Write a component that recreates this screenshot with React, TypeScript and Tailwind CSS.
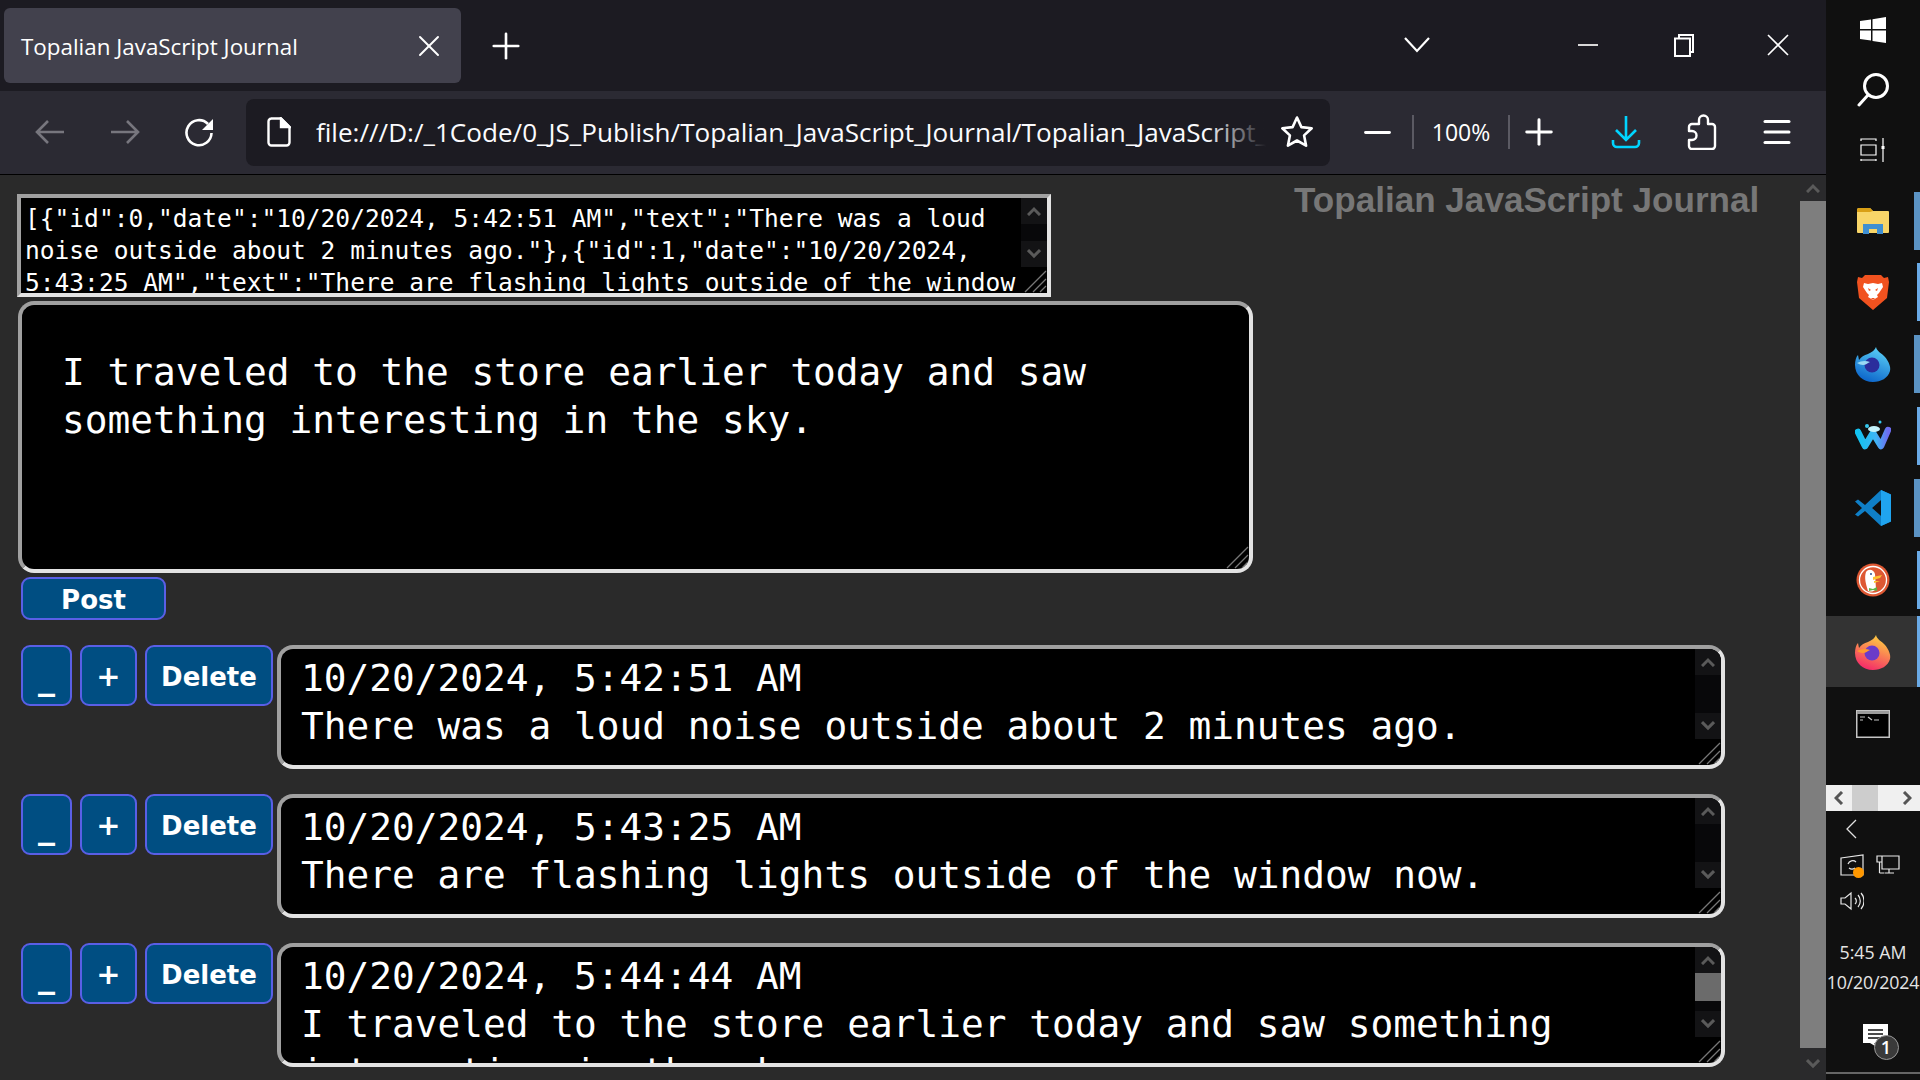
import { Menu, Minus, Plus, X } from 'lucide-react'

const MONO = "font-['DejaVu_Sans_Mono','Liberation_Mono',monospace]"
const UI = "font-['Open_Sans','Noto_Sans',sans-serif]"
const BEVEL = 'border-4 border-t-[#a0a0a0] border-l-[#a0a0a0] border-r-[#e3e3e3] border-b-[#e3e3e3]'

const JSON_TEXT =
  '[{"id":0,"date":"10/20/2024, 5:42:51 AM","text":"There was a loud noise outside about 2 minutes ago."},{"id":1,"date":"10/20/2024, 5:43:25 AM","text":"There are flashing lights outside of the window now."},{"id":2,"date":"10/20/2024, 5:44:44 AM"}]'

const ENTRIES = [
  { date: '10/20/2024, 5:42:51 AM', text: 'There was a loud noise outside about 2 minutes ago.', thumb: false },
  { date: '10/20/2024, 5:43:25 AM', text: 'There are flashing lights outside of the window now.', thumb: false },
  { date: '10/20/2024, 5:44:44 AM', text: 'I traveled to the store earlier today and saw something interesting in the sky.', thumb: true },
]

function Chevron({ up, size = 14 }: { up?: boolean; size?: number }) {
  return (
    <svg width={size} height={size * 0.72} viewBox="0 0 14 10" fill="none" stroke="#5a5a5a" strokeWidth="3">
      <path d={up ? 'M1 9l6-6 6 6' : 'M1 1l6 6 6-6'} />
    </svg>
  )
}

function BoxScrollbar({ thumb }: { thumb?: boolean }) {
  return (
    <div className="flex h-[90px] w-[26px] shrink-0 flex-col bg-[#08080a]">
      <div className="flex h-[26px] items-center justify-center bg-[#131315]">
        <Chevron up />
      </div>
      <div className="flex-1">{thumb && <div className="h-[28px] bg-[#6b6b6b]" />}</div>
      <div className="flex h-[26px] items-center justify-center bg-[#131315]">
        <Chevron />
      </div>
    </div>
  )
}

function Grip() {
  return (
    <svg className="absolute right-0 bottom-0" width="24" height="24" viewBox="0 0 24 24" stroke="#777" strokeWidth="1.3">
      <path d="M2 23L23 2M10 23L23 10M17 23L23 17" />
    </svg>
  )
}

function ActionButton({ label, className }: { label: string; className: string }) {
  return (
    <button className={`h-[61px] rounded-[9px] border-2 border-[#5a5fe6] bg-[#004e82] pt-[3px] font-['DejaVu_Sans',sans-serif] font-bold text-white ${className}`}>
      {label}
    </button>
  )
}

function EntryRow({ date, text, thumb }: { date: string; text: string; thumb: boolean }) {
  return (
    <div className="mt-[25px] ml-[4px] flex items-start">
      <ActionButton label="_" className="w-[51px] text-[34px] leading-[40px]" />
      <ActionButton label="+" className="ml-[8px] w-[57px] text-[29px]" />
      <ActionButton label="Delete" className="ml-[8px] w-[128px] text-[26px]" />
      <div className={`relative ml-[4px] flex h-[124px] w-[1448px] overflow-hidden rounded-[16px] bg-black ${BEVEL}`}>
        <div className={`min-w-0 flex-1 pt-[5px] pl-[20px] text-[37.8px] leading-[48px] text-white ${MONO}`}>
          <div>{date}</div>
          <div>{text}</div>
        </div>
        <BoxScrollbar thumb={thumb} />
        <Grip />
      </div>
    </div>
  )
}

function ToolIcon({ width, children }: { width: number; children: React.ReactNode }) {
  return (
    <div className="flex shrink-0 items-center justify-center" style={{ width }}>
      {children}
    </div>
  )
}

function TabStrip() {
  return (
    <div className="flex h-[91px] shrink-0 items-start bg-[#1c1b22] text-white">
      <div className={`mt-[8px] ml-[4px] flex h-[75px] w-[457px] items-center justify-between rounded-[6px] bg-[#42414d] pr-[14px] pl-[17px] text-[22.4px] ${UI}`}>
        <span className="pt-[2px]">Topalian JavaScript Journal</span>
        <X size={36} strokeWidth={1.3} />
      </div>
      <div className="mt-[46px] ml-[24px] -translate-y-1/2">
        <Plus size={42} strokeWidth={1.5} />
      </div>
      <div className="flex-1" />
      <div className="mt-[45px] mr-[147px] -translate-y-1/2">
        <svg width="28" height="18" viewBox="0 0 28 18" fill="none" stroke="white" strokeWidth="2.2">
          <path d="M2 2l12 13L26 2" />
        </svg>
      </div>
      <div className="mt-[44px] mr-[75px] h-[2px] w-[20px] bg-[#d8d8d8]" />
      <div className="mt-[45px] mr-[69px] -translate-y-1/2">
        <svg width="24" height="24" viewBox="0 0 24 24" fill="none" stroke="white" strokeWidth="2">
          <path d="M6 5V2h14v17h-3" />
          <path d="M2 5.5h15V23H2z" />
        </svg>
      </div>
      <div className="mt-[45px] mr-[36px] -translate-y-1/2">
        <svg width="24" height="24" viewBox="0 0 24 24" fill="none" stroke="white" strokeWidth="1.6">
          <path d="M2 2l20 20M22 2L2 22" />
        </svg>
      </div>
    </div>
  )
}

function Toolbar() {
  return (
    <div className="flex h-[84px] shrink-0 items-center border-b border-black bg-[#2b2a33] pb-[1px] pl-[12px] text-white">
      <ToolIcon width={75}>
        <svg width="30" height="26" viewBox="0 0 30 26" fill="none" stroke="#77767e" strokeWidth="2.6">
          <path d="M29 13H2M13 2L2 13l11 11" />
        </svg>
      </ToolIcon>
      <ToolIcon width={75}>
        <svg width="30" height="26" viewBox="0 0 30 26" fill="none" stroke="#77767e" strokeWidth="2.6">
          <path d="M1 13h27M17 2l11 11-11 11" />
        </svg>
      </ToolIcon>
      <ToolIcon width={75}>
        <svg className="-ml-[2px]" width="30" height="30" viewBox="0 0 30 30" fill="none">
          <path d="M24 7A12.5 12.5 0 1 0 27.5 16" stroke="white" strokeWidth="2.6" />
          <path d="M29 2v11H18z" fill="white" />
        </svg>
      </ToolIcon>
      <div className="ml-[9px] flex h-[67px] w-[1084px] shrink-0 items-center rounded-[8px] bg-[#1c1b22] pl-[21px]">
        <svg className="shrink-0" width="24" height="30" viewBox="0 0 24 30" fill="none" stroke="white" strokeWidth="2.4">
          <path d="M4 1.5h10L22.5 10v15.5a3 3 0 0 1-3 3h-15a3 3 0 0 1-3-3v-21a3 3 0 0 1 3-3z" />
          <path d="M14 1.5l8.5 8.5H14z" fill="white" />
        </svg>
        <div className={`relative ml-[25px] w-[950px] shrink-0 overflow-hidden pt-[2px] text-[26.1px] whitespace-nowrap text-[#fbfbfe] ${UI}`}>
          file:///D:/_1Code/0_JS_Publish/Topalian_JavaScript_Journal/Topalian_JavaScript_Journal.html
          <div className="absolute inset-y-0 right-0 w-[60px] bg-gradient-to-r from-transparent to-[#1c1b22]" />
        </div>
        <ToolIcon width={62}>
          <svg width="34" height="34" viewBox="0 0 34 34" fill="none" stroke="white" strokeWidth="2.6" strokeLinejoin="round">
            <path d="M17 2.5l4.4 9.6 10.3 1.2-7.6 7.1 2 10.3-9.1-5.2-9.1 5.2 2-10.3-7.6-7.1 10.3-1.2z" />
          </svg>
        </ToolIcon>
      </div>
      <ToolIcon width={82}>
        <Minus size={41} strokeWidth={1.7} className="ml-[12px]" />
      </ToolIcon>
      <div className="h-[34px] w-[2px] shrink-0 bg-[#5b5a63]" />
      <div className={`flex w-[94px] shrink-0 justify-center text-[23px] ${UI}`}>100%</div>
      <div className="h-[34px] w-[2px] shrink-0 bg-[#5b5a63]" />
      <ToolIcon width={58}>
        <Plus size={42} strokeWidth={1.7} />
      </ToolIcon>
      <ToolIcon width={116}>
        <svg width="30" height="34" viewBox="0 0 30 34" fill="none" stroke="#00d4ff" strokeWidth="2.6">
          <path d="M15 1v24M5 15l10 10 10-10M2 25v3a4 4 0 0 0 4 4h18a4 4 0 0 0 4-4v-3" />
        </svg>
      </ToolIcon>
      <ToolIcon width={36}>
        <svg width="30" height="36" viewBox="0 0 30 36" fill="none" stroke="white" strokeWidth="2.4" strokeLinejoin="round">
          <path d="M12 10V6a4.5 4.5 0 0 1 9 0v4h4a3 3 0 0 1 3 3v19a3 3 0 0 1-3 3H5a3 3 0 0 1-3-3v-6h3a4 4 0 0 0 0-9H2v-4a3 3 0 0 1 3-3z" />
        </svg>
      </ToolIcon>
      <ToolIcon width={106}>
        <Menu size={36} strokeWidth={2} className="ml-[8px]" />
      </ToolIcon>
    </div>
  )
}

function PageScrollbar() {
  return (
    <div className="flex w-[26px] shrink-0 flex-col">
      <div className="flex h-[26px] items-center justify-center bg-[#2a2a2c]">
        <Chevron up />
      </div>
      <div className="flex-1 bg-[#7e7e7e]" />
      <div className="flex h-[32px] items-center justify-center bg-[#2a2a2c]">
        <Chevron />
      </div>
    </div>
  )
}

function Page() {
  return (
    <div className="flex min-h-0 flex-1 overflow-hidden bg-[#2a2a2a]">
      <div className="min-w-0 flex-1 overflow-hidden pt-[19px] pl-[17px]">
        <div className="flex items-start">
          <div className={`relative flex h-[103px] w-[1034px] shrink-0 overflow-hidden bg-black ${BEVEL}`}>
            <div className={`min-w-0 flex-1 pt-[5px] pl-[4px] text-[24.55px] leading-[32px] text-white ${MONO}`}>{JSON_TEXT}</div>
            <div className="h-[69px] w-[26px] shrink-0">
              <div className="flex h-[26px] items-center justify-center bg-[#131315]">
                <Chevron up />
              </div>
              <div className="h-[17px] bg-[#08080a]" />
              <div className="flex h-[26px] items-center justify-center bg-[#131315]">
                <Chevron />
              </div>
            </div>
            <Grip />
          </div>
          <div className="-mt-[14px] ml-[243px] font-['Liberation_Sans',Arial,sans-serif] text-[35.1px] leading-[40px] font-bold whitespace-nowrap text-[#777777]">
            Topalian JavaScript Journal
          </div>
        </div>
        <div className={`relative mt-[4px] ml-[1px] h-[272px] w-[1235px] overflow-hidden rounded-[16px] bg-black pt-[43px] pr-[120px] pl-[40px] text-[37.8px] leading-[48px] text-white ${BEVEL} ${MONO}`}>
          I traveled to the store earlier today and saw something interesting in the sky.
          <Grip />
        </div>
        <button className="mt-[4px] ml-[4px] block h-[43px] w-[145px] rounded-[9px] border-2 border-[#5a5fe6] bg-[#004e82] pt-[2px] font-['DejaVu_Sans',sans-serif] text-[26px] font-bold text-white">
          Post
        </button>
        <div>
          {ENTRIES.map((entry) => (
            <EntryRow key={entry.date} {...entry} />
          ))}
        </div>
      </div>
      <PageScrollbar />
    </div>
  )
}

function WinLogo() {
  return (
    <svg width="26" height="26" viewBox="0 0 26 26" fill="white">
      <path d="M0 4l11-1.6V12H0zM12.5 2.2L26 0v12H12.5zM0 13.5h11v10L0 22zM12.5 13.5H26V26l-13.5-2z" />
    </svg>
  )
}

function FolderLogo() {
  return (
    <svg width="34" height="28" viewBox="0 0 34 28">
      <path d="M1 3a2 2 0 0 1 2-2h11l3 3h15a1 1 0 0 1 1 1v20a1 1 0 0 1-1 1H2a1 1 0 0 1-1-1z" fill="#f8d568" />
      <path d="M1 3a2 2 0 0 1 2-2h11l3 3-3 1H1z" fill="#d99f15" />
      <path d="M7 17h20v10h-6v-5h-8v5H7z" fill="#3f8fd2" />
    </svg>
  )
}

function BraveLogo() {
  return (
    <svg width="32" height="36" viewBox="0 0 32 36">
      <path d="M8 1h16l3 3 4-1 1 5-2 16-7 6-7 6-7-6-7-6L0 8l1-5 4 1z" fill="#f1521f" />
      <path d="M7 9l4 1 5-1 5 1 4-1 1 4-4 6-2 2 1 2-5 3-5-3 1-2-2-2-4-6z" fill="white" />
      <path d="M11 14l3 2-2 1zM21 14l-3 2 2 1zM14 24h4l-2 2z" fill="#f1521f" />
    </svg>
  )
}

function FoxLogo({ id, colors }: { id: string; colors: [string, string, string, string] }) {
  return (
    <svg width="36" height="36" viewBox="0 0 36 36">
      <defs>
        <linearGradient id={id} x1="0.7" y1="0" x2="0.3" y2="1">
          <stop offset="0" stopColor={colors[0]} />
          <stop offset="1" stopColor={colors[1]} />
        </linearGradient>
      </defs>
      <path d="M21 1c1 5 6 6 9 10 4 5 6 10 5 14-2 7-9 11-17 11C8 36 0 29 0 19c0-4 1-8 3-10l1 5c2-3 5-5 9-6 4-2 7-4 8-7z" fill={`url(#${id})`} />
      <circle cx="17" cy="19" r="7.5" fill={colors[2]} />
      <path d="M2 17c4-2 8-3 13-1-3 1-4 3-7 3-2 0-4-1-6-2z" fill={colors[3]} />
    </svg>
  )
}

function WaveLogo() {
  return (
    <svg width="36" height="32" viewBox="0 0 36 32">
      <defs>
        <linearGradient id="wave-w" x1="0" y1="0" x2="1" y2="0">
          <stop offset="0" stopColor="#12c2f0" />
          <stop offset="0.6" stopColor="#3fb5f5" />
          <stop offset="1" stopColor="#6d6cf0" />
        </linearGradient>
      </defs>
      <path d="M3 12l7 14 8-13 8 13 7-16" fill="none" stroke="url(#wave-w)" strokeWidth="6.5" strokeLinecap="round" strokeLinejoin="round" />
      <ellipse cx="19" cy="9" rx="6" ry="3" fill="#c4f3fb" />
      <circle cx="12" cy="6" r="2" fill="#35c8ee" />
      <circle cx="25" cy="2" r="1.5" fill="#35c8ee" />
    </svg>
  )
}

function CodeLogo() {
  return (
    <svg width="36" height="36" viewBox="0 0 36 36">
      <path d="M26 0l10 4.5v27L26 36 10 21l-7 5.5L0 24.5l7-6.5L0 11.5l3-2L10 15z" fill="#0f7fc7" />
      <path d="M26 0l10 4.5v27L26 36V26l-9-8 9-8z" fill="#20a4ef" />
      <path d="M26 10v16l-9-8z" fill="#101010" />
    </svg>
  )
}

function DuckLogo() {
  return (
    <svg width="34" height="34" viewBox="0 0 34 34">
      <circle cx="17" cy="17" r="16.5" fill="#de5833" />
      <circle cx="17" cy="17" r="13.5" fill="none" stroke="white" strokeWidth="1.3" />
      <path d="M10 9c3-4 8-2 9 2l1 15c-2 3-6 3-8 2-2-7-4-13-2-19z" fill="white" />
      <path d="M17 14l9-2-2 3-7 2zM18 18h6l-6 2z" fill="#fdc22e" />
      <path d="M13 25l4 1 4-2v4l-4-1-4 1z" fill="#5fb346" />
      <circle cx="15" cy="11" r="1" fill="#2d4f8e" />
    </svg>
  )
}

function TermLogo() {
  return (
    <svg width="34" height="28" viewBox="0 0 34 28">
      <rect x="0.75" y="0.75" width="32.5" height="26.5" fill="black" stroke="#c4c4c4" strokeWidth="1.5" />
      <rect x="1" y="1" width="32" height="3" fill="#9a9a9a" />
      <path d="M4 7h5M4 10h3M12 7l4 3M18 10h5" stroke="#c4c4c4" strokeWidth="1.2" fill="none" />
    </svg>
  )
}

function DockSlot({ children, bar, active, className = 'h-[72px]' }: { children: React.ReactNode; bar?: 'wide' | 'thin'; active?: boolean; className?: string }) {
  return (
    <div className={`flex shrink-0 items-center ${className} ${active ? 'bg-[#333333]' : ''}`}>
      <div className="flex flex-1 items-center justify-center pl-[6px]">{children}</div>
      <div className={`flex w-[6px] shrink-0 justify-end ${active ? 'h-full' : 'h-[58px]'}`}>
        {bar && <div className={`h-full ${bar === 'wide' ? 'w-[6px] bg-[#5b93c4]' : 'w-[3px] bg-[#6aaae6]'}`} />}
      </div>
    </div>
  )
}

function Taskbar() {
  return (
    <div className="flex h-full w-[94px] shrink-0 flex-col bg-[#101010]">
      <div className="flex h-[60px] shrink-0 items-center justify-center">
        <WinLogo />
      </div>
      <div className="flex h-[60px] shrink-0 items-center justify-center">
        <svg width="32" height="34" viewBox="0 0 32 34" fill="none" stroke="white" strokeWidth="3">
          <circle cx="19" cy="13" r="11.5" />
          <path d="M11 22L2 32" strokeLinecap="round" />
        </svg>
      </div>
      <div className="flex h-[65px] shrink-0 items-start justify-center pt-[18px]">
        <svg width="26" height="24" viewBox="0 0 26 24" fill="none" stroke="white" strokeWidth="1.2">
          <path d="M1 3V1h15v2M1 21v2M16 21v2M1 22h15M1 7h15v10H1zM23 0v24" />
          <rect x="21.5" y="8" width="3" height="3" fill="white" stroke="none" />
        </svg>
      </div>
      <DockSlot bar="wide" className="h-[71px]"><FolderLogo /></DockSlot>
      <DockSlot bar="thin"><BraveLogo /></DockSlot>
      <DockSlot bar="wide"><FoxLogo id="fox-dev" colors={['#5bd1f7', '#0a62c9', '#2b2d9c', '#9ad9f5']} /></DockSlot>
      <DockSlot bar="thin"><WaveLogo /></DockSlot>
      <DockSlot bar="wide"><CodeLogo /></DockSlot>
      <DockSlot bar="thin"><DuckLogo /></DockSlot>
      <DockSlot bar="thin" active className="h-[71px]"><FoxLogo id="fox-rel" colors={['#ffd23f', '#f3266a', '#6b3bc9', '#ff9a2e']} /></DockSlot>
      <DockSlot className="h-[74px]"><TermLogo /></DockSlot>
      <div className="flex-1" />
      <div className="flex h-[26px] shrink-0 items-center bg-[#f0f0f0]">
        <div className="flex w-[26px] justify-center text-[#555]">
          <svg width="10" height="14" viewBox="0 0 10 14" fill="none" stroke="#555" strokeWidth="3"><path d="M8 1L2 7l6 6" /></svg>
        </div>
        <div className="h-full w-[26px] bg-[#cdcdcd]" />
        <div className="flex-1" />
        <div className="flex w-[26px] justify-center">
          <svg width="10" height="14" viewBox="0 0 10 14" fill="none" stroke="#555" strokeWidth="3"><path d="M2 1l6 6-6 6" /></svg>
        </div>
      </div>
      <div className="flex h-[36px] shrink-0 items-center pl-[20px]">
        <svg width="11" height="20" viewBox="0 0 11 20" fill="none" stroke="#e0e0e0" strokeWidth="1.3"><path d="M10 1L1 10l9 9" /></svg>
      </div>
      <div className="flex h-[36px] shrink-0 items-center gap-[12px] pl-[14px]">
        <div className="relative h-[22px] w-[24px]">
          <svg width="24" height="22" viewBox="0 0 24 22" fill="none" stroke="#e8e8e8" strokeWidth="1.2">
            <path d="M1 4l22-3v20H1zM8 10a5 5 0 0 1 8-2M15 14a5 5 0 0 1-6 0" />
          </svg>
          <div className="absolute right-0 -bottom-[2px] h-[11px] w-[11px] rounded-full bg-[#ff9800]" />
        </div>
        <svg width="24" height="20" viewBox="0 0 24 20" fill="none" stroke="#e8e8e8" strokeWidth="1.2">
          <path d="M6 1h17v13H6zM1 1h5v6H1zM3.5 7v11M13 14v4M9 18h9M3.5 18h5" />
        </svg>
      </div>
      <div className="flex h-[36px] shrink-0 items-center pl-[14px]">
        <svg width="24" height="20" viewBox="0 0 24 20" fill="none" stroke="#e8e8e8" strokeWidth="1.2">
          <path d="M1 7h4l6-5v16l-6-5H1zM15 7a4 4 0 0 1 0 6M18 4a9 9 0 0 1 0 12M21 2a12 12 0 0 1 0 16" />
        </svg>
      </div>
      <div className={`mt-[18px] shrink-0 text-center text-[17.8px] leading-[30px] whitespace-nowrap text-[#e4e4e4] ${UI}`}>
        <div>5:45 AM</div>
        <div className="-mx-[2px] tracking-[-0.2px]">10/20/2024</div>
      </div>
      <div className="mt-[27px] flex h-[47px] shrink-0 justify-center pl-[4px]">
        <div className="relative h-[28px] w-[25px]">
          <svg width="25" height="25" viewBox="0 0 25 25">
            <path d="M0 0h25v19H11l6 6-10-6H0z" fill="white" />
            <path d="M5 6h15M5 10h15M5 14h15" stroke="#111" strokeWidth="1.3" />
          </svg>
          <div className={`absolute top-[11px] left-[11px] flex h-[25px] w-[25px] items-center justify-center rounded-full border border-[#999] bg-[#3a3a3a] text-[18px] font-semibold text-white ${UI}`}>
            1
          </div>
        </div>
      </div>
      <div className="mt-[1px] h-[2px] shrink-0 bg-[#666666]" />
      <div className="h-[6px] shrink-0" />
    </div>
  )
}

export default function App() {
  return (
    <div className="flex h-[1080px] w-[1920px] overflow-hidden bg-[#101010]">
      <div className="flex min-w-0 flex-1 flex-col">
        <TabStrip />
        <Toolbar />
        <Page />
      </div>
      <Taskbar />
    </div>
  )
}
